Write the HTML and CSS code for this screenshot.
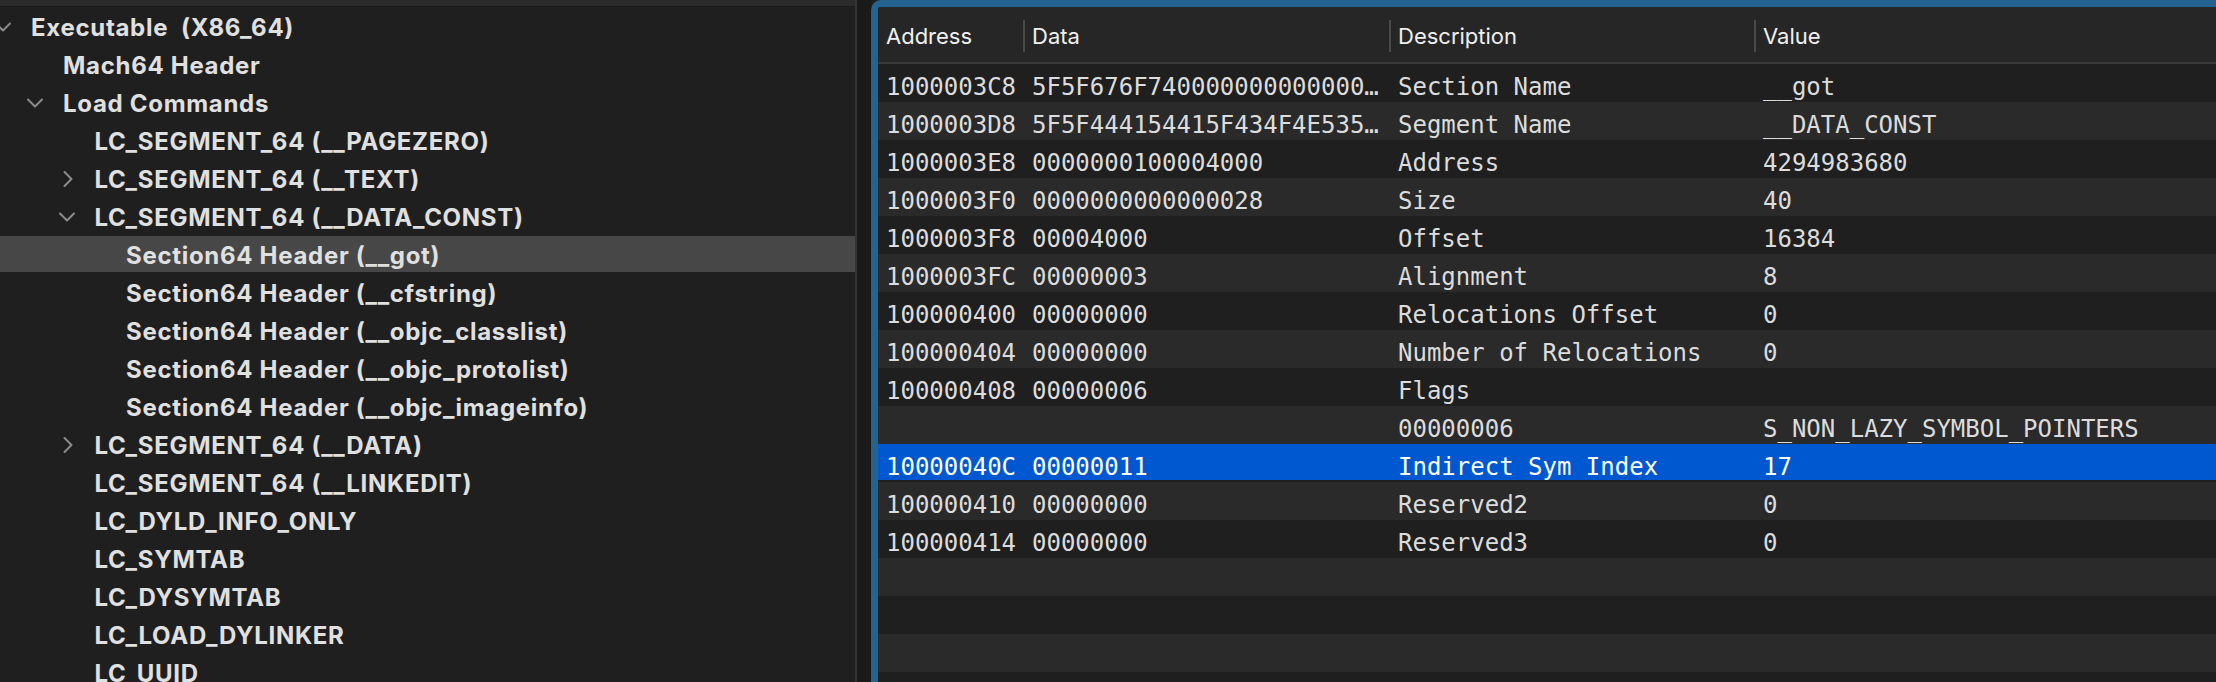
FILE: index.html
```html
<!DOCTYPE html>
<html>
<head>
<meta charset="utf-8">
<link rel="stylesheet" href="styles.css">
</head>
<body>
<div class="app">
  <div class="sidebar">
    <div class="topband"></div>
    <div class="tree">
      <div class="node l0"><span class="chev"><svg viewBox="0 0 16 10" class="down"><path d="M1 1.5 L8 8.5 L15 1.5"/></svg></span><span class="label">Executable  (X86_64)</span></div>
      <div class="node l1"><span class="chev"></span><span class="label">Mach64 Header</span></div>
      <div class="node l1"><span class="chev"><svg viewBox="0 0 16 10" class="down"><path d="M1 1.5 L8 8.5 L15 1.5"/></svg></span><span class="label">Load Commands</span></div>
      <div class="node l2"><span class="chev"></span><span class="label">LC_SEGMENT_64 (__PAGEZERO)</span></div>
      <div class="node l2"><span class="chev"><svg viewBox="0 0 10 16" class="right"><path d="M1.5 1 L8.5 8 L1.5 15"/></svg></span><span class="label">LC_SEGMENT_64 (__TEXT)</span></div>
      <div class="node l2"><span class="chev"><svg viewBox="0 0 16 10" class="down"><path d="M1 1.5 L8 8.5 L15 1.5"/></svg></span><span class="label">LC_SEGMENT_64 (__DATA_CONST)</span></div>
      <div class="node l3 selected"><span class="chev"></span><span class="label">Section64 Header (__got)</span></div>
      <div class="node l3"><span class="chev"></span><span class="label">Section64 Header (__cfstring)</span></div>
      <div class="node l3"><span class="chev"></span><span class="label">Section64 Header (__objc_classlist)</span></div>
      <div class="node l3"><span class="chev"></span><span class="label">Section64 Header (__objc_protolist)</span></div>
      <div class="node l3"><span class="chev"></span><span class="label">Section64 Header (__objc_imageinfo)</span></div>
      <div class="node l2"><span class="chev"><svg viewBox="0 0 10 16" class="right"><path d="M1.5 1 L8.5 8 L1.5 15"/></svg></span><span class="label">LC_SEGMENT_64 (__DATA)</span></div>
      <div class="node l2"><span class="chev"></span><span class="label">LC_SEGMENT_64 (__LINKEDIT)</span></div>
      <div class="node l2"><span class="chev"></span><span class="label">LC_DYLD_INFO_ONLY</span></div>
      <div class="node l2"><span class="chev"></span><span class="label">LC_SYMTAB</span></div>
      <div class="node l2"><span class="chev"></span><span class="label">LC_DYSYMTAB</span></div>
      <div class="node l2"><span class="chev"></span><span class="label">LC_LOAD_DYLINKER</span></div>
      <div class="node l2"><span class="chev"></span><span class="label">LC_UUID</span></div>
    </div>
  </div>
  <div class="splitter"></div>
  <div class="tablewrap">
    <div class="thead">
      <div class="th first">Address</div>
      <div class="th">Data</div>
      <div class="th">Description</div>
      <div class="th">Value</div>
    </div>
    <div class="tbody">
      <div class="tr"><div class="td first">1000003C8</div><div class="td">5F5F676F740000000000000…</div><div class="td">Section Name</div><div class="td">__got</div></div>
      <div class="tr"><div class="td first">1000003D8</div><div class="td">5F5F444154415F434F4E535…</div><div class="td">Segment Name</div><div class="td">__DATA_CONST</div></div>
      <div class="tr"><div class="td first">1000003E8</div><div class="td">0000000100004000</div><div class="td">Address</div><div class="td">4294983680</div></div>
      <div class="tr"><div class="td first">1000003F0</div><div class="td">0000000000000028</div><div class="td">Size</div><div class="td">40</div></div>
      <div class="tr"><div class="td first">1000003F8</div><div class="td">00004000</div><div class="td">Offset</div><div class="td">16384</div></div>
      <div class="tr"><div class="td first">1000003FC</div><div class="td">00000003</div><div class="td">Alignment</div><div class="td">8</div></div>
      <div class="tr"><div class="td first">100000400</div><div class="td">00000000</div><div class="td">Relocations Offset</div><div class="td">0</div></div>
      <div class="tr"><div class="td first">100000404</div><div class="td">00000000</div><div class="td">Number of Relocations</div><div class="td">0</div></div>
      <div class="tr"><div class="td first">100000408</div><div class="td">00000006</div><div class="td">Flags</div><div class="td"></div></div>
      <div class="tr"><div class="td first"></div><div class="td"></div><div class="td">00000006</div><div class="td">S_NON_LAZY_SYMBOL_POINTERS</div></div>
      <div class="tr sel"><div class="td first">10000040C</div><div class="td">00000011</div><div class="td">Indirect Sym Index</div><div class="td">17</div></div>
      <div class="tr"><div class="td first">100000410</div><div class="td">00000000</div><div class="td">Reserved2</div><div class="td">0</div></div>
      <div class="tr"><div class="td first">100000414</div><div class="td">00000000</div><div class="td">Reserved3</div><div class="td">0</div></div>
      <div class="tr"></div>
      <div class="tr"></div>
      <div class="tr"></div>
      <div class="tr"></div>
    </div>
  </div>
</div>
</body>
</html>
```

FILE: styles.css
```css
* { box-sizing: border-box; }
html, body {
  margin: 0;
  padding: 0;
  background: #1f1f1f;
  width: 2216px;
  height: 682px;
  overflow: hidden;
}
.app {
  display: flex;
  width: 2216px;
  height: 682px;
  overflow: hidden;
}
.sidebar {
  width: 857px;
  flex: none;
  background: #1f1f1f;
  border-right: 2px solid #333333;
  display: flex;
  flex-direction: column;
  overflow: hidden;
}
.topband {
  height: 7px;
  background: #2b2b2b;
  border-bottom: 1px solid #1a1a1a;
  flex: none;
}
.tree {
  display: flex;
  flex-direction: column;
  font-family: "Inter", "Liberation Sans", sans-serif;
  font-weight: 700;
  font-size: 24px;
  letter-spacing: 0.7px;
  color: #e0e0e0;
}
.node {
  height: 38px;
  flex: none;
  display: flex;
  align-items: center;
  padding-top: 2px;
}
.node.selected {
  background: #474747;
  box-shadow: inset 0 1px 0 #1f1f1f, inset 0 -1px 0 #1f1f1f;
}
.l0 { padding-left: 0; }
.l1 { padding-left: 32px; }
.l2 { padding-left: 63.5px; }
.l3 { padding-left: 95px; }
.chev {
  width: 31px;
  flex: none;
  display: flex;
  align-items: center;
  justify-content: center;
  height: 100%;
}
.chev svg {
  fill: none;
  stroke: #8c8c8c;
  stroke-width: 2;
  stroke-linecap: round;
  stroke-linejoin: round;
}
.chev svg.down {
  width: 16px;
  height: 10px;
  margin-left: -25px;
}
.chev svg.right {
  width: 10px;
  height: 16px;
  margin-left: -22px;
}
.label {
  white-space: pre;
}
.splitter {
  width: 14px;
  flex: none;
  background: #1a1a1a;
}
.tablewrap {
  flex: 1;
  min-width: 0;
  border-left: 7px solid #22648f;
  border-top: 7px solid #22648f;
  border-top-left-radius: 10px;
  background: #1f1f1f;
  display: flex;
  flex-direction: column;
  overflow: hidden;
}
.thead, .tr {
  display: grid;
  grid-template-columns: 145px 366px 365px 1fr;
}
.thead {
  height: 57px;
  flex: none;
  background: #262626;
  border-bottom: 2px solid #3a3a3a;
  font-family: "Inter", "Liberation Sans", sans-serif;
  font-size: 22px;
  color: #f0f0f0;
}
.th {
  position: relative;
  display: flex;
  align-items: center;
  padding-left: 9px;
  padding-top: 2px;
}
.th.first { padding-left: 8px; }
.th + .th::before {
  content: "";
  position: absolute;
  left: 0;
  top: 13px;
  width: 2px;
  height: 32px;
  background: #4a4a4a;
}
.tbody {
  display: flex;
  flex-direction: column;
  font-family: "DejaVu Sans Mono", "Liberation Mono", monospace;
  font-size: 24px;
  color: #dcdcdc;
}
.tr {
  height: 38px;
  flex: none;
  background: #1f1f1f;
}
.tr:nth-child(even) { background: #2a2a2a; }
.tr.sel {
  background: #0058d0;
  color: #ffffff;
  box-shadow: inset 0 -2px 0 #1f1f1f;
}
.td {
  display: flex;
  align-items: center;
  padding-left: 9px;
  padding-top: 8px;
  white-space: pre;
  overflow: hidden;
}
.td.first { padding-left: 8px; }
```
